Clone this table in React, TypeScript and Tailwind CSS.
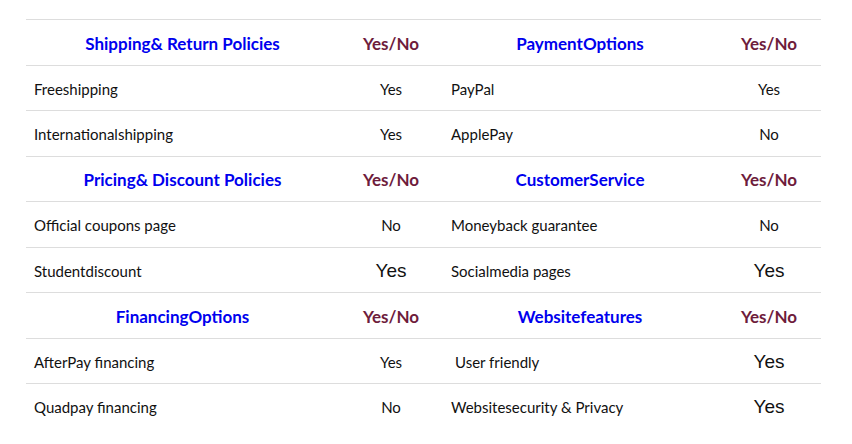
import React from "react";

type Cell = { label: string; value: string; big?: boolean; indent?: boolean };
type Section = { title: string; rows: Cell[] };

const pairs: [Section, Section][] = [
  [
    {
      title: "Shipping& Return Policies",
      rows: [
        { label: "Freeshipping", value: "Yes" },
        { label: "Internationalshipping", value: "Yes" },
      ],
    },
    {
      title: "PaymentOptions",
      rows: [
        { label: "PayPal", value: "Yes" },
        { label: "ApplePay", value: "No" },
      ],
    },
  ],
  [
    {
      title: "Pricing& Discount Policies",
      rows: [
        { label: "Official coupons page", value: "No" },
        { label: "Studentdiscount", value: "Yes", big: true },
      ],
    },
    {
      title: "CustomerService",
      rows: [
        { label: "Moneyback guarantee", value: "No" },
        { label: "Socialmedia pages", value: "Yes", big: true },
      ],
    },
  ],
  [
    {
      title: "FinancingOptions",
      rows: [
        { label: "AfterPay financing", value: "Yes" },
        { label: "Quadpay financing", value: "No" },
      ],
    },
    {
      title: "Websitefeatures",
      rows: [
        { label: "User friendly", value: "Yes", big: true, indent: true },
        { label: "Websitesecurity & Privacy", value: "Yes", big: true },
      ],
    },
  ],
];

const font = { fontFamily: "Lato, 'Open Sans', sans-serif" };

function Value({ c }: { c: Cell }) {
  if (c.big) {
    return (
      <span className="text-[19px] text-[#111]" style={{ fontFamily: "'Liberation Sans', Arial, sans-serif" }}>
        {c.value}
      </span>
    );
  }
  return <span className="text-[15px] text-[#111]">{c.value}</span>;
}

export default function App() {
  const rows: React.ReactNode[] = [];
  pairs.forEach(([a, b], i) => {
    rows.push(
      <div key={`h${i}`} className="flex h-[45.5px] border-t border-[#dddddd] items-center pt-[2px]">
        <div className="w-[313px] text-center text-[17px] font-bold text-[#0000ee]">{a.title}</div>
        <div className="w-[104px] text-center text-[17px] font-bold text-[#6e1c3c]">Yes/No</div>
        <div className="w-[274px] text-center text-[17px] font-bold text-[#0000ee]">{b.title}</div>
        <div className="w-[104px] text-center text-[17px] font-bold text-[#6e1c3c]">Yes/No</div>
      </div>
    );
    a.rows.forEach((ra, j) => {
      const rb = b.rows[j];
      rows.push(
        <div key={`r${i}-${j}`} className="flex h-[45.5px] items-center border-t border-[#dddddd] pt-[2px]">
          <div className="w-[313px] pl-[8px] text-[15px] text-[#111]">{ra.label}</div>
          <div className="w-[104px] text-center">
            <Value c={ra} />
          </div>
          <div className={`w-[274px] text-[15px] text-[#111] ${rb.indent ? "pl-[12px]" : "pl-[8px]"}`}>{rb.label}</div>
          <div className="w-[104px] text-center">
            <Value c={rb} />
          </div>
        </div>
      );
    });
  });

  return (
    <div className="w-[852px] h-[444px] bg-white" style={font}>
      <div className="pt-[19px] pl-[26px]">
        <div className="w-[795px]">{rows}</div>
      </div>
    </div>
  );
}
